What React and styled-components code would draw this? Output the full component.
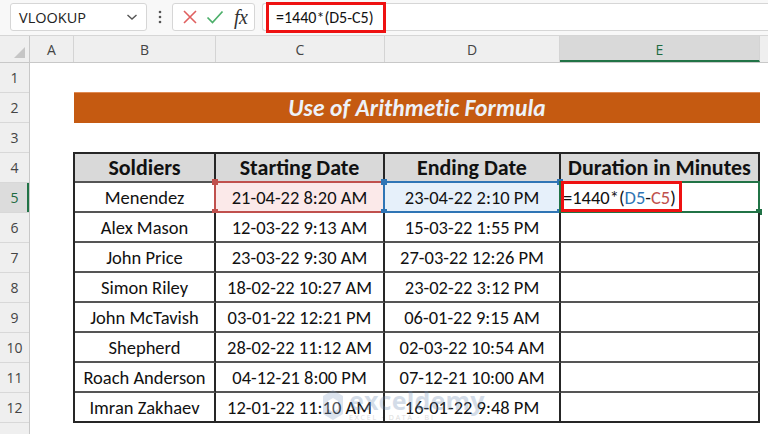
import React from 'react';
import styled, { createGlobalStyle } from 'styled-components';

const Global = createGlobalStyle`
  html, body { margin: 0; padding: 0; background: #fff; }
  body { width: 768px; height: 434px; overflow: hidden; font-family: Carlito, Lato, "Noto Sans", sans-serif; }
  * { box-sizing: border-box; }
`;

const Page = styled.div`
  width: 768px;
  height: 434px;
  overflow: hidden;
  display: flex;
  flex-direction: column;
  background: #fff;
`;

const Toolbar = styled.div`
  height: 36px;
  flex: none;
  display: flex;
  align-items: center;
  padding: 0 0 1px 10px;
  background: #f8f8f8;
  border-bottom: 1px solid #d6d6d6;
  font-family: "Open Sans", "Noto Sans", sans-serif;
`;

const NameBox = styled.div`
  width: 137px;
  height: 28px;
  border: 1px solid #d6d6d6;
  border-radius: 3px;
  background: #fff;
  display: flex;
  align-items: center;
  justify-content: space-between;
  padding: 0 8px 0 8px;
  font-size: 14.5px;
  color: #222;
`;

const Dots = styled.div`
  width: 25px;
  display: flex;
  justify-content: center;
`;

const FxBox = styled.div`
  width: 83px;
  height: 28px;
  border: 1px solid #d6d6d6;
  border-radius: 3px;
  background: #fff;
  display: flex;
  align-items: center;
  gap: 8px;
  padding-left: 9px;
`;

const Fx = styled.span`
  font-family: "Liberation Serif", "DejaVu Serif", serif;
  font-style: italic;
  font-size: 20px;
  color: #333;
  margin-left: 2px;
  letter-spacing: -0.5px;
  line-height: 1;
`;

const FormulaBox = styled.div`
  flex: 1;
  margin-left: 7px;
  height: 28px;
  border: 1px solid #d6d6d6;
  border-right: none;
  border-radius: 3px 0 0 3px;
  background: #fff;
  display: flex;
  align-items: center;
  padding-left: 3px;
`;

const FormulaHighlight = styled.div`
  width: 120px;
  height: 31px;
  border: 3px solid #ee1111;
  display: flex;
  align-items: center;
  padding-left: 7px;
  font-family: Carlito, Lato, sans-serif;
  font-size: 16px;
  color: #111;
`;

const ColHeaderRow = styled.div`
  height: 27px;
  flex: none;
  display: flex;
  background: #efefef;
  border-bottom: 1px solid #c8c8c8;
`;

const Corner = styled.div`
  width: 30px;
  flex: none;
  border-right: 1px solid #c8c8c8;
  display: flex;
  align-items: flex-end;
  justify-content: flex-end;
  padding: 0 4px 4px 0;
`;

const ColHead = styled.div`
  width: ${p => p.$w}px;
  flex: none;
  display: flex;
  align-items: center;
  justify-content: center;
  font-family: "Open Sans", "Noto Sans", sans-serif;
  font-size: 14px;
  color: ${p => (p.$active ? '#1e6b41' : '#444')};
  background: ${p => (p.$active ? '#d9d9d9' : 'transparent')};
  border-right: 1px solid #d4d4d4;
  border-bottom: ${p => (p.$active ? '2px solid #217346' : 'none')};
  padding-top: ${p => (p.$active ? '2px' : '0')};
`;

const Body = styled.div`
  flex: 1;
  display: flex;
  min-height: 0;
`;

const RowHeaders = styled.div`
  width: 30px;
  flex: none;
  background: #efefef;
  border-right: 1px solid #c8c8c8;
  display: flex;
  flex-direction: column;
`;

const RowHead = styled.div`
  height: 30px;
  flex: none;
  display: flex;
  align-items: center;
  justify-content: center;
  font-family: "Open Sans", "Noto Sans", sans-serif;
  font-size: 14px;
  color: ${p => (p.$active ? '#1e6b41' : '#444')};
  background: ${p => (p.$active ? '#dcdcdc' : 'transparent')};
  border-bottom: 1px solid #d8d8d8;
  box-shadow: ${p => (p.$active ? 'inset -2px 0 0 #217346' : 'none')};
`;

const Canvas = styled.div`
  flex: 1;
  position: relative;
  display: flex;
  flex-direction: column;
`;

const EmptyRow = styled.div`
  height: ${p => p.$h}px;
  flex: none;
`;

const TitleBand = styled.div`
  margin-left: 44px;
  width: 686px;
  height: 31px;
  flex: none;
  background: #c55a11;
  border-top: 1px solid #e08a52;
  display: flex;
  align-items: center;
  justify-content: center;
  color: #eef2f8;
  font-weight: 700;
  font-style: italic;
  font-size: 23.5px;
  letter-spacing: 0.1px;
`;

const Table = styled.div`
  margin-left: 43px;
  width: 687px;
  flex: none;
  display: grid;
  grid-template-columns: 141px 169px 176px 199px;
  border-left: 2px solid #262626;
  border-top: 2px solid #262626;
`;

const Cell = styled.div`
  position: relative;
  height: ${p => (p.$head ? 29 : 30)}px;
  border-right: 2px solid #262626;
  border-bottom: 2px solid ${p => (p.$last ? '#262626' : '#555')};
  background: ${p => (p.$head ? '#d9d9d9' : p.$bg || '#fff')};
  display: flex;
  align-items: center;
  justify-content: ${p => (p.$left ? 'flex-start' : 'center')};
  padding-left: ${p => (p.$left ? '2px' : '0')};
  font-size: ${p => (p.$head ? '22px' : '18.5px')};
  font-weight: ${p => (p.$head ? 700 : 400)};
  color: #111;
  white-space: nowrap;
`;

const RefBorder = styled.div`
  position: absolute;
  left: -2px;
  top: -2px;
  right: -2px;
  bottom: -2px;
  border: 2px solid ${p => p.$c};
  pointer-events: none;
`;

const Handle = styled.span`
  position: absolute;
  width: 6px;
  height: 6px;
  background: ${p => p.$c};
  ${p => (p.$t ? 'top: -4px;' : 'bottom: -4px;')}
  ${p => (p.$l ? 'left: -4px;' : 'right: -4px;')}
`;

const EditBox = styled.div`
  position: absolute;
  left: 0px;
  top: -2px;
  width: 121px;
  height: 31px;
  border: 3px solid #ee1111;
  pointer-events: none;
`;

const Ref = styled.span`
  color: ${p => p.$c};
`;

const Watermark = styled.div`
  position: absolute;
  left: 292px;
  top: 325px;
  display: flex;
  align-items: center;
  gap: 5px;
  opacity: 0.3;
  pointer-events: none;
`;

const WmText = styled.div`
  display: flex;
  flex-direction: column;
  line-height: 1;
  color: #6f8db5;
  font-family: "Open Sans", sans-serif;
`;

const WmBig = styled.span`
  font-size: 25px;
  font-weight: 700;
  letter-spacing: 0.2px;
`;

const WmSmall = styled.span`
  font-size: 7px;
  letter-spacing: 1.8px;
  color: #888;
  margin-top: 1px;
`;

const rows = [
  ['Menendez', '21-04-22 8:20 AM', '23-04-22 2:10 PM'],
  ['Alex Mason', '12-03-22 9:13 AM', '15-03-22 1:55 PM'],
  ['John Price', '23-03-22 9:30 AM', '27-03-22 12:26 PM'],
  ['Simon Riley', '18-02-22 10:27 AM', '23-02-22 3:12 PM'],
  ['John McTavish', '03-01-22 12:21 PM', '06-01-22 9:15 AM'],
  ['Shepherd', '28-02-22 11:12 AM', '02-03-22 10:54 AM'],
  ['Roach Anderson', '04-12-21 8:00 PM', '07-12-21 10:00 AM'],
  ['Imran Zakhaev', '12-01-22 11:10 AM', '16-01-22 9:48 PM'],
];

const cols = [
  { k: 'A', w: 44 },
  { k: 'B', w: 142 },
  { k: 'C', w: 169 },
  { k: 'D', w: 175 },
  { k: 'E', w: 200 },
  { k: '', w: 10 },
];

const Corners = ({ c }) => (
  <>
    <Handle $c={c} $t $l />
    <Handle $c={c} $t />
    <Handle $c={c} $l />
    <Handle $c={c} />
  </>
);

const Formula = () => (
  <>
    =1440*(<Ref $c="#2f75b5">D5</Ref>-<Ref $c="#c0504d">C5</Ref>)
  </>
);

export default function App() {
  return (
    <Page>
      <Global />
      <Toolbar>
        <NameBox>
          <span>VLOOKUP</span>
          <svg width="12" height="8" viewBox="0 0 12 8">
            <path d="M1.5 2 L6 6 L10.5 2" fill="none" stroke="#555" strokeWidth="1.4" />
          </svg>
        </NameBox>
        <Dots>
          <svg width="4" height="14" viewBox="0 0 4 14">
            <circle cx="2" cy="2" r="1.3" fill="#555" />
            <circle cx="2" cy="7" r="1.3" fill="#555" />
            <circle cx="2" cy="12" r="1.3" fill="#555" />
          </svg>
        </Dots>
        <FxBox>
          <svg width="16" height="16" viewBox="0 0 16 16">
            <path d="M2 2 L14 14 M14 2 L2 14" stroke="#e06060" strokeWidth="1.6" fill="none" />
          </svg>
          <svg width="18" height="16" viewBox="0 0 18 16">
            <path d="M1.5 8.5 L6.5 13.5 L16.5 2.5" stroke="#4caf6a" strokeWidth="1.7" fill="none" />
          </svg>
          <Fx>fx</Fx>
        </FxBox>
        <FormulaBox>
          <FormulaHighlight>=1440*(D5-C5)</FormulaHighlight>
        </FormulaBox>
      </Toolbar>
      <ColHeaderRow>
        <Corner>
          <svg width="11" height="11" viewBox="0 0 11 11">
            <path d="M11 0 L11 11 L0 11 Z" fill="#c6c6c6" />
          </svg>
        </Corner>
        {cols.map(c => (
          <ColHead key={c.k + c.w} $w={c.w} $active={c.k === 'E'}>
            {c.k}
          </ColHead>
        ))}
      </ColHeaderRow>
      <Body>
        <RowHeaders>
          {Array.from({ length: 13 }, (_, i) => (
            <RowHead key={i} $active={i === 4}>
              {i < 12 ? i + 1 : ''}
            </RowHead>
          ))}
        </RowHeaders>
        <Canvas>
          <EmptyRow $h={29} />
          <TitleBand>Use of Arithmetic Formula</TitleBand>
          <EmptyRow $h={29} />
          <Table>
            <Cell $head>Soldiers</Cell>
            <Cell $head>Starting Date</Cell>
            <Cell $head>Ending Date</Cell>
            <Cell $head>Duration in Minutes</Cell>
            {rows.map((r, i) => {
              const first = i === 0;
              const last = i === rows.length - 1;
              return (
                <React.Fragment key={r[0]}>
                  <Cell $last={last}>{r[0]}</Cell>
                  <Cell $last={last} $bg={first ? '#fbe9e9' : undefined}>
                    {r[1]}
                    {first && (
                      <RefBorder $c="#c0504d">
                        <Corners c="#c0504d" />
                      </RefBorder>
                    )}
                  </Cell>
                  <Cell $last={last} $bg={first ? '#e6f0fa' : undefined}>
                    {r[2]}
                    {first && (
                      <RefBorder $c="#2f75b5">
                        <Corners c="#2f75b5" />
                      </RefBorder>
                    )}
                  </Cell>
                  <Cell $last={last} $left={first}>
                    {first && <Formula />}
                    {first && (
                      <>
                        <RefBorder $c="#217346">
                          <Handle $c="#217346" />
                        </RefBorder>
                        <EditBox />
                      </>
                    )}
                  </Cell>
                </React.Fragment>
              );
            })}
          </Table>
          <Watermark>
            <svg width="22" height="32" viewBox="0 0 22 32">
              <path d="M11 1 L21 7 L21 25 L11 31 L1 25 L1 7 Z" fill="#8aa4c8" />
              <path d="M11 9 L16 12 L16 20 L11 23 L6 20 L6 12 Z" fill="#fff" />
            </svg>
            <WmText>
              <WmBig>exceldemy</WmBig>
              <WmSmall>EXCEL · DATA · BI</WmSmall>
            </WmText>
          </Watermark>
        </Canvas>
      </Body>
    </Page>
  );
}
